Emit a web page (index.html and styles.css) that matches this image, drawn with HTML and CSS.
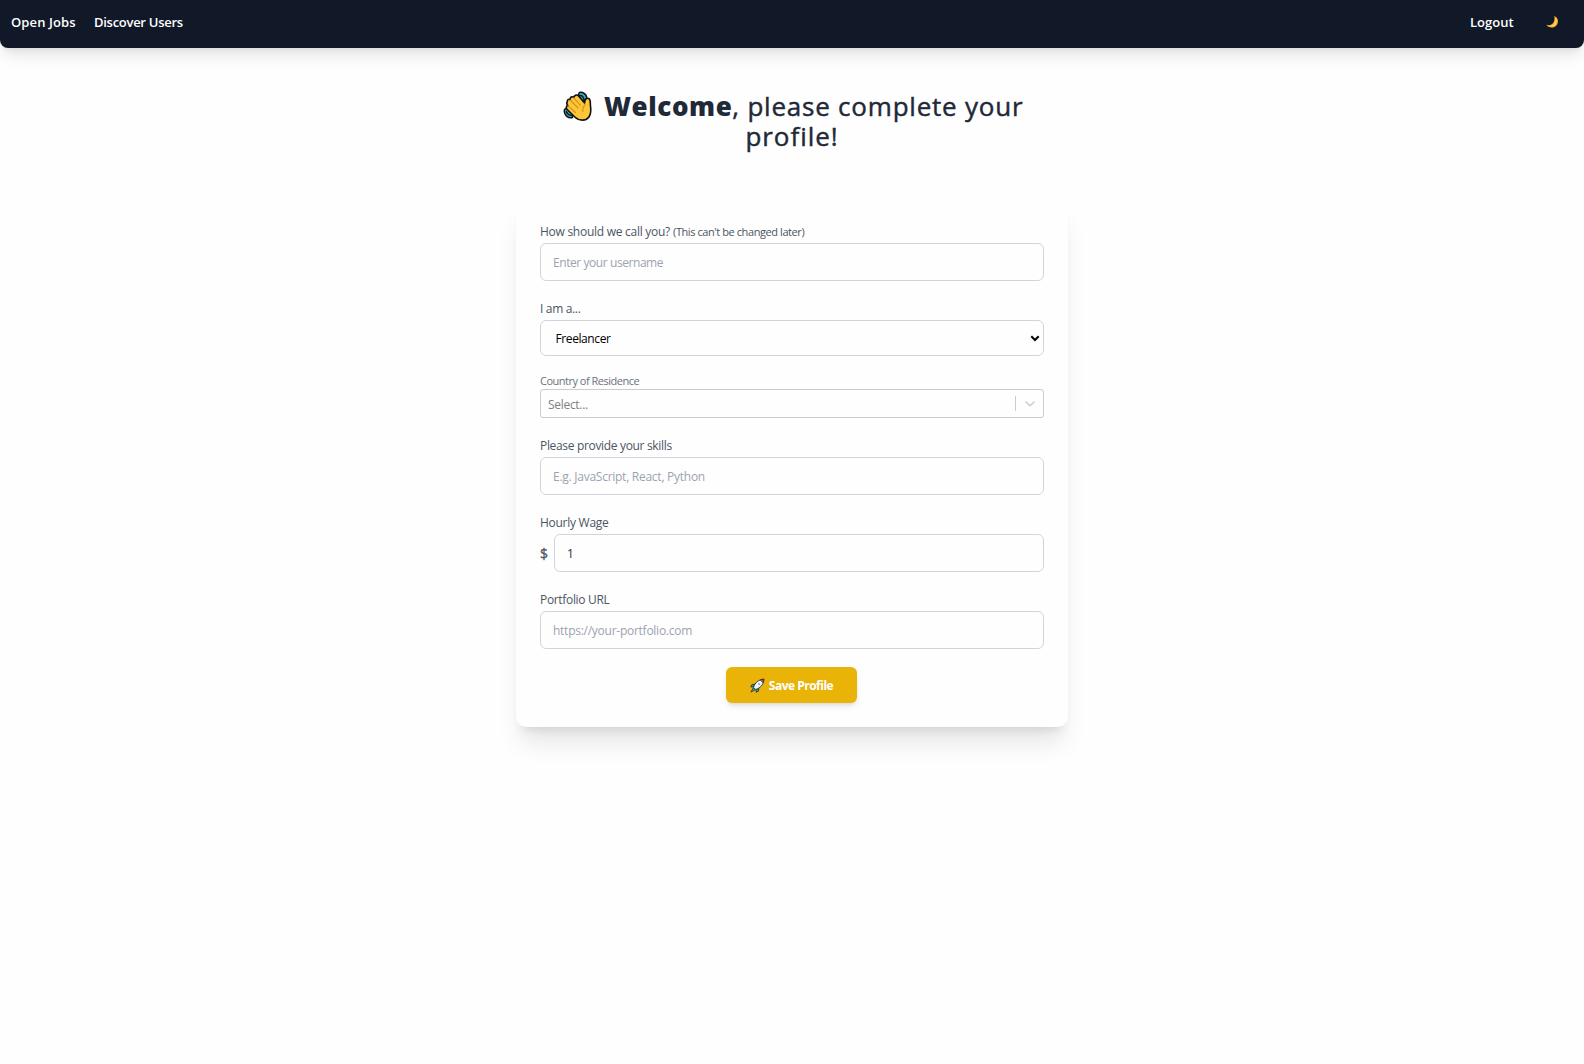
FILE: index.html
```
<!DOCTYPE html>
<html lang="en">
<head>
<meta charset="utf-8">
<title>Complete your profile</title>
<link rel="stylesheet" href="styles.css">
</head>
<body>
<nav class="navbar">
  <div class="nav-links"><a class="link-jobs">Open Jobs</a><a class="link-users">Discover Users</a></div>
  <div class="nav-actions">
    <a class="link-logout">Logout</a>
    <svg class="moon" viewBox="0 0 14 14"><path d="M9.2 1C13.300 2.300 14 7 11.700 10.200C9 13.600 3.800 13.300 1.200 9.800C4.800 11 7.600 9.400 8.800 6.700C9.700 4.700 9.700 2.700 9.200 1Z" fill="#f4ae2b"/><path d="M9.800 1.800C12.500 4 12.500 7.700 10.300 10C8 12 5 12 3 11C7 11.300 9.500 9 10.200 6.500C10.600 4.800 10.300 3.100 9.800 1.800Z" fill="#ffd35c"/></svg>
  </div>
</nav>
<main class="page">
  <h1 class="title">
    <span class="title-row">
      <svg class="wave" viewBox="0 0 32 32" stroke-linecap="round" stroke-linejoin="round">
        <path d="M16.500 4C16.500 1 18.500 .8 20.500 1.500C23.300 2.500 25 5 24.700 8.500L20 10ZM4.800 17.500C2 17.500 1.800 20 2.800 22.500C4.200 25.800 7 27.200 10.500 26.500L10 22Z" fill="#35a7c5" stroke="#111" stroke-width="1.500"/>
        <path d="M17.800 4.300Q21 4.300 22 8.300M4.300 20.500Q5.500 23.800 9 24.300" fill="none" stroke="#111" stroke-width="1.300"/>
        <path d="M5.300 10.800C5 8.800 6.500 7.700 8.200 8.700C7.800 6 10 5 11.800 6.300C12.500 3.700 15 3.400 16.800 5.200L22.600 12C22.700 9 24 6.700 26.600 7.400C28.800 8.100 28.200 11 28.400 14C29.200 19.500 29.300 22.800 27 25.900C23.600 30.300 17 30 12.800 26L5.200 18.500C3.700 16.800 4 15 5.800 14.600C4.600 13.300 4.500 12 5.300 10.800Z" fill="#fcc638" stroke="#111" stroke-width="1.600"/>
        <path d="M8.200 9L16 17M11.800 6.800L18.500 14.500M6 14.800L13.500 21.500M23.300 13.500Q20 16.500 21 20.500" fill="none" stroke="#d98c1c" stroke-width="1.100"/>
      </svg>
      <strong>Welcome</strong><span class="title-rest">, please complete your</span>
    </span>
    <span class="title-last">profile!</span>
  </h1>
  <form class="card">
    <div class="field">
      <label for="name"><span class="t-call">How should we call you?</span> <small>(This can't be changed later)</small></label>
      <input id="name" class="input in-name" placeholder="Enter your username">
    </div>
    <div class="field">
      <label class="t-iam" for="role">I am a...</label>
      <div class="select-wrap">
        <select id="role" class="input role"><option>Freelancer</option></select>
        <svg class="arrow" viewBox="0 0 10 7"><path d="M1.300 1.300L5 5L8.700 1.300" fill="none" stroke="#000" stroke-width="2"/></svg>
      </div>
    </div>
    <div class="field country-field">
      <span class="country-label">Country of Residence</span>
      <div class="country">
        <span class="country-value">Select...</span>
        <span class="divider"></span>
        <svg class="chevron" viewBox="0 0 10 6"><path d="M1 1L5 4.700L9 1" fill="none" stroke="#ccc" stroke-width="1.500" stroke-linecap="round"/></svg>
      </div>
    </div>
    <div class="field">
      <label class="t-skills" for="skills">Please provide your skills</label>
      <input id="skills" class="input in-skills" placeholder="E.g. JavaScript, React, Python">
    </div>
    <div class="field">
      <label class="t-wage" for="wage">Hourly Wage</label>
      <div class="wage"><span class="dollar">$</span><input id="wage" class="input" value="1"></div>
    </div>
    <div class="field">
      <label class="t-url" for="url">Portfolio URL</label>
      <input id="url" class="input in-url" placeholder="https://your-portfolio.com">
    </div>
    <button class="save" type="button">
      <svg class="rocket" viewBox="0 0 16 16" stroke-linejoin="round">
        <path d="M5 6.500L2 7L.8 9.500L4 9.500ZM9.500 11L9 14L6.500 15.200L6.500 12Z" fill="#24a5a5" stroke="#222" stroke-width=".8"/>
        <path d="M3.500 10.500L1 15L5.500 12.500Z" fill="#35b8c8" stroke="#222" stroke-width=".8"/>
        <path d="M3.800 10C5 5.500 9 1.500 14.800 1.200C14.800 7 10.500 11 6 12.200Z" fill="#eef5fa" stroke="#222" stroke-width=".9"/>
        <path d="M11 2.200Q12.800 1.200 14.800 1.200Q14.800 3.200 13.800 5Z" fill="#d9422e" stroke="#222" stroke-width=".6"/>
        <circle cx="9.700" cy="6.300" r="1.300" fill="#79c9ed"/>
      </svg>
      <span>Save Profile</span>
    </button>
  </form>
</main>
</body>
</html>
```
FILE: styles.css
```
* { box-sizing: border-box; }
body { margin: 0; min-height: 1064px; background: #fefefe; color: #4b5563; font-family: "Open Sans", "Noto Sans", sans-serif; font-size: 12px; overflow: hidden; }
.navbar { height: 48px; padding: 0 25px 4px 11px; display: flex; align-items: center; justify-content: space-between; background: #111827; border-radius: 0 0 8px 8px; box-shadow: 0 10px 15px -3px rgb(0 0 0 / .1), 0 4px 6px -4px rgb(0 0 0 / .1); color: #fff; font-size: 13px; font-weight: 600; white-space: nowrap; }
.nav-links { display: flex; gap: 18px; }
.link-jobs { width: 65px; letter-spacing: .12px; }
.link-users { letter-spacing: -.28px; }
.nav-actions { display: flex; align-items: center; }
.link-logout { width: 75px; letter-spacing: 0; }
.moon { width: 14px; height: 14px; }
.page { width: 552px; margin: 0 auto; }
.title { margin: 0; height: 152px; padding-top: 43px; display: flex; flex-direction: column; align-items: center; color: #1f2937; font-size: 26px; line-height: 30px; font-weight: 500; white-space: nowrap; }
.title-row { display: flex; align-self: flex-start; padding-left: 46px; height: 30px; }
.wave { width: 32px; height: 32px; margin-right: 10px; }
.title strong { font-weight: 800; letter-spacing: .6px; }
.title-rest, .title-last { letter-spacing: .78px; -webkit-text-stroke: .45px #1f2937; }
.title-last { letter-spacing: .95px; }
.card { height: 527px; padding: 23px 24px 24px; border-radius: 10px; background: #fefefe; box-shadow: 0 20px 25px -5px rgb(0 0 0 / .1), 0 8px 10px -6px rgb(0 0 0 / .1); display: flex; flex-direction: column; }
.field { display: flex; flex-direction: column; margin-bottom: 19px; }
.field label { height: 20px; line-height: 18px; white-space: pre; }
.t-call { letter-spacing: -.27px; }
.t-iam, .t-skills, .t-url { letter-spacing: -.33px; }
.t-wage { letter-spacing: -.27px; }
.field small { font-size: 11px; letter-spacing: -.42px; }
.input { display: block; width: 100%; height: 38px; padding: 1px 12px 0; border: 1px solid #d1d5db; border-radius: 6px; background: #fefefe; color: #1f2937; font: inherit; outline: 0; }
.input::placeholder { color: #9ca3af; opacity: 1; }
.in-name { letter-spacing: -.43px; }
.in-skills, .in-url { letter-spacing: -.26px; }
.select-wrap { position: relative; }
.role { height: 36px; padding: 0 14.500px; appearance: none; color: #000; letter-spacing: -.4px; }
.arrow { position: absolute; right: 4px; top: 15px; width: 10px; height: 7px; }
.country-field { margin-bottom: 19px; }
.country-label { height: 14px; line-height: 12px; font-size: 11px; letter-spacing: -.5px; color: #6b7280; }
.country { height: 29px; display: flex; align-items: center; border: 1px solid #ccc; border-radius: 3px; padding: 0 8px 0 7px; color: #808080; }
.country-value { flex: 1; padding-top: 2px; letter-spacing: -.3px; }
.divider { width: 1px; height: 15px; background: #ccc; margin-right: 9px; }
.chevron { width: 10px; height: 6px; }
.wage { display: flex; align-items: center; }
.dollar { width: 14px; flex: none; font-size: 14px; -webkit-text-stroke: .3px #4b5563; }
.save { width: 131px; height: 36px; margin: -1px 1px 0 0; padding: 0; align-self: center; display: flex; align-items: center; justify-content: center; gap: 4px; border: 0; border-radius: 6px; background: #eab308; box-shadow: 0 4px 6px -1px rgb(0 0 0 / .1), 0 2px 4px -2px rgb(0 0 0 / .1); color: #fff; font: 700 12px "Open Sans", sans-serif; letter-spacing: -.5px; }
.rocket { width: 15px; height: 15px; }
```
